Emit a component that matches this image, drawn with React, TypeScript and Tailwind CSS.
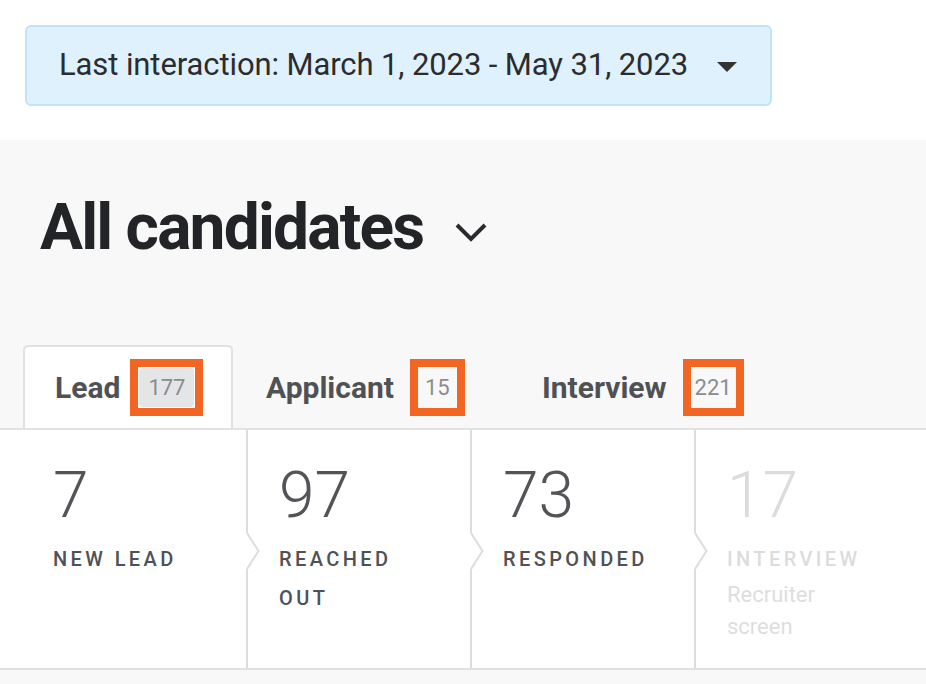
import React from "react";

function Notch() {
  return (
    <div className="flex w-[14px] shrink-0 flex-col">
      <div className="h-[103px] w-[2px] bg-[#dddddd]" />
      <svg width="14" height="36" viewBox="0 0 14 36" className="block">
        <polyline points="1,0 12.5,18 1,36" fill="none" stroke="#dddddd" strokeWidth="2" />
      </svg>
      <div className="w-[2px] flex-1 bg-[#dddddd]" />
    </div>
  );
}

type Stage = { n: string; label: string; sub?: string; dim?: boolean };

function StageCard({ s, first }: { s: Stage; first?: boolean }) {
  const numColor = s.dim ? "text-[#dcdcdc]" : "text-[#535457]";
  const labelColor = s.dim ? "text-[#dcdcdc]" : "text-[#505155]";
  return (
    <div className={first ? "w-[223px] shrink-0 pl-[30px] pt-[34px]" : "w-[210px] shrink-0 pl-[19px] pt-[34px]"}>
      <div className={"text-[64px] leading-[64px] font-light " + numColor}>{s.n}</div>
      <div className={"mt-[12px] w-[160px] text-[20px] leading-[39px] font-medium uppercase tracking-[0.17em] " + labelColor}>
        {s.label}
      </div>
      {s.sub && (
        <div className="w-[120px] text-[22px] leading-[32px] text-[#dedede]">{s.sub}</div>
      )}
    </div>
  );
}

function Tab({
  label,
  count,
  active,
  width,
  pl,
  px,
}: {
  label: string;
  count: string;
  active?: boolean;
  width: string;
  pl: string;
  px: string;
}) {
  return (
    <div
      className={
        "flex h-[83px] shrink-0 items-center " +
        width +
        " " +
        pl +
        (active
          ? " rounded-t-[5px] border-2 border-b-0 border-[#e1e1e1] bg-white"
          : " border-2 border-transparent border-b-0")
      }
    >
      <span className="text-[30px] font-bold text-[#505155] tracking-[0px]">{label}</span>
      <span className={"flex border-[8px] border-[#f26522] p-[1px] " + (active ? "ml-[10px]" : "ml-[16px]")}>
        <span
          className={
            "flex h-[39px] items-center rounded-[4px] text-[22px] text-[#8b8c8f] " +
            px +
            (active ? " bg-[#e4e5e7]" : "")
          }
        >
          {count}
        </span>
      </span>
    </div>
  );
}

export default function App() {
  const stages: Stage[] = [
    { n: "7", label: "New lead" },
    { n: "97", label: "Reached out" },
    { n: "73", label: "Responded" },
    { n: "17", label: "Interview", sub: "Recruiter screen", dim: true },
  ];
  return (
    <div className="h-[684px] w-[926px] overflow-hidden bg-[#f8f8f8] font-['Roboto',sans-serif]">
      <div className="h-[140px] bg-white pl-[25px] pt-[25px]">
        <button className="flex h-[81px] w-[747px] items-center rounded-[6px] border-2 border-[#bfe3fa] bg-[#dff1fd] pl-[32px] text-left">
          <span className="text-[31px] text-[#2b2c2f] tracking-[-0.1px]">
            Last interaction: March 1, 2023 - May 31, 2023
          </span>
          <svg width="20" height="10" viewBox="0 0 20 10" className="ml-auto mr-[33px] mt-[2px]">
            <polygon points="0,0 20,0 10,10" fill="#333333" />
          </svg>
        </button>
      </div>

      <div className="flex items-center pl-[40px] pt-[56px]">
        <h1 className="text-[64px] leading-[64px] font-bold text-[#232427] tracking-[-1.8px]">All candidates</h1>
        <svg width="34" height="22" viewBox="0 0 34 22" className="ml-[31px] mt-[10px]">
          <polyline points="3,3 17,17 31,3" fill="none" stroke="#2a2b2e" strokeWidth="4" />
        </svg>
      </div>

      <div className="mt-[85px] flex border-b-2 border-[#e2e2e2] pl-[23px]">
        <Tab label="Lead" count="177" active width="w-[210px]" pl="pl-[30px]" px="px-[9px]" />
        <Tab label="Applicant" count="15" width="w-[277px]" pl="pl-[31px]" px="px-[6px]" />
        <Tab label="Interview" count="221" width="w-[300px]" pl="pl-[30px]" px="px-[3px]" />
      </div>

      <div className="flex h-[240px] border-b-2 border-[#e0e0e0] bg-white pl-[23px]">
        <StageCard s={stages[0]} first />
        <Notch />
        <StageCard s={stages[1]} />
        <Notch />
        <StageCard s={stages[2]} />
        <Notch />
        <StageCard s={stages[3]} />
      </div>
    </div>
  );
}
